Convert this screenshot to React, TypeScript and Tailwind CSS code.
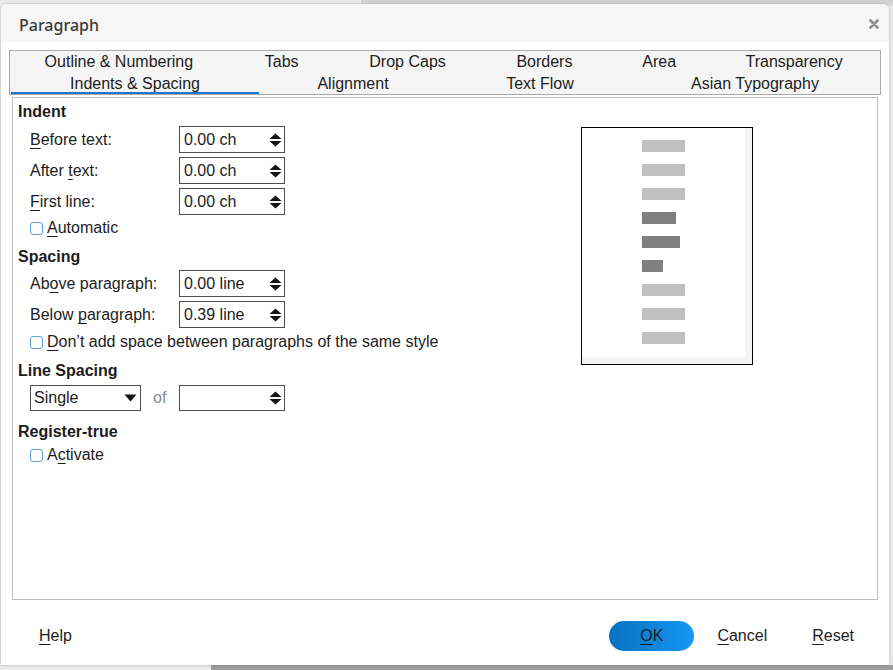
import React from 'react';

const U = ({ children }: { children: React.ReactNode }) => <span className="underline underline-offset-[3px]">{children}</span>;

const SpinArrows = () => (
  <svg width="13" height="14" viewBox="0 0 13 14" className="shrink-0">
    <path d="M0.5 6 L6.5 0.5 L12.5 6 Z M0.5 8 L12.5 8 L6.5 13.5 Z" fill="#141414" />
  </svg>
);

const SpinBox = ({ value, h = 'h-[27px]' }: { value: string; h?: string }) => (
  <div className={`w-[106px] ${h} border border-[#4d4d4d] bg-white flex items-center justify-between pl-[4px] pr-[2px]`}>
    <span>{value}</span>
    <SpinArrows />
  </div>
);

const Checkbox = ({ children }: { children: React.ReactNode }) => (
  <div className="flex items-center h-[20px] pt-[2px] pl-[17px]">
    <span className="w-[13px] h-[13px] rounded-[3px] border-[1.5px] border-[#5ba0de] bg-white mr-[4px]" />
    <span>{children}</span>
  </div>
);

const Section = ({ title, mt }: { title: string; mt: string }) => (
  <div className={`${mt} h-[20px] pt-[2px] flex items-center pl-[5px] font-bold`}>{title}</div>
);

const Row = ({ label, value, mt }: { label: React.ReactNode; value: string; mt: string }) => (
  <div className={`${mt} flex items-center pl-[17px]`}>
    <div className="w-[149px] pt-[1px]">{label}</div>
    <SpinBox value={value} />
  </div>
);

const bars = [
  { w: 'w-[43px]', c: 'bg-[#c0c0c0]' },
  { w: 'w-[43px]', c: 'bg-[#c0c0c0]' },
  { w: 'w-[43px]', c: 'bg-[#c0c0c0]' },
  { w: 'w-[34px]', c: 'bg-[#808080]' },
  { w: 'w-[38px]', c: 'bg-[#808080]' },
  { w: 'w-[21px]', c: 'bg-[#808080]' },
  { w: 'w-[43px]', c: 'bg-[#c0c0c0]' },
  { w: 'w-[43px]', c: 'bg-[#c0c0c0]' },
  { w: 'w-[43px]', c: 'bg-[#c0c0c0]' },
];

const row1 = [
  { t: 'Outline & Numbering', w: 'w-[216px]' },
  { t: 'Tabs', w: 'w-[110px]' },
  { t: 'Drop Caps', w: 'w-[142px]' },
  { t: 'Borders', w: 'w-[132px]' },
  { t: 'Area', w: 'w-[98px]' },
  { t: 'Transparency', w: 'w-[172px]' },
];

const row2 = [
  { t: 'Indents & Spacing', w: 'w-[248px]', active: true },
  { t: 'Alignment', w: 'w-[188px]' },
  { t: 'Text Flow', w: 'w-[186px]' },
  { t: 'Asian Typography', w: 'w-[244px]' },
];

export default function App() {
  return (
    <div className="relative w-[893px] h-[670px] bg-[#ebebeb] overflow-hidden font-['Liberation_Sans',Arial,sans-serif] text-[16px] text-[#1c1c1c]">
      {/* desktop behind the dialog */}
      <div className="absolute left-[361px] top-0 right-0 h-[6px] bg-gradient-to-b from-[#cfcfcf] to-[#dedede]" />
      <div className="absolute left-[211px] bottom-0 right-0 h-[5px] bg-[#9d9d9d]" />

      <div className="absolute left-[1px] top-[4px] w-[888px] h-[661px] bg-white rounded-t-[6px] shadow-[0_0_3px_rgba(0,0,0,0.25)] flex flex-col">
        <div className="h-[38px] shrink-0 bg-[#f6f6f6] rounded-t-[6px] flex items-center justify-between pt-[4px] pl-[18px] pr-[10px]">
          <span className="font-['Noto_Sans',sans-serif] font-medium text-[16px] text-[#3b3b3b]">Paragraph</span>
          <svg width="10" height="10" viewBox="0 0 10 10" className="-mt-[2px]">
            <path d="M1.5 1.5 L8.5 8.5 M8.5 1.5 L1.5 8.5" stroke="#8c8c8c" strokeWidth="2.6" strokeLinecap="round" />
          </svg>
        </div>

        <div className="mt-[8px] mx-[8px] border border-[#a9a9a9] bg-[#f5f5f5] flex flex-col">
          <div className="flex h-[21px] items-center pl-[1px]">
            {row1.map(tab => (
              <div key={tab.t} className={`${tab.w} text-center leading-[21px]`}>{tab.t}</div>
            ))}
          </div>
          <div className="flex h-[22px] pl-[1px]">
            {row2.map(tab => (
              <div
                key={tab.t}
                className={`${tab.w} text-center leading-[20px] pt-[2px] border-b-2 ${tab.active ? 'border-[#1b76cf]' : 'border-transparent'}`}
              >
                {tab.t}
              </div>
            ))}
          </div>
        </div>

        <div className="mt-[2px] mx-[11px] h-[503px] border border-[#bdbdbd] bg-white flex">
          <div className="w-[560px] flex flex-col">
            <Section title="Indent" mt="mt-[3px]" />
            <Row mt="mt-[5px]" label={<><U>B</U>efore text:</>} value="0.00 ch" />
            <Row mt="mt-[4px]" label={<>After <U>t</U>ext:</>} value="0.00 ch" />
            <Row mt="mt-[4px]" label={<><U>F</U>irst line:</>} value="0.00 ch" />
            <div className="mt-[2px]">
              <Checkbox><U>A</U>utomatic</Checkbox>
            </div>

            <Section title="Spacing" mt="mt-[9px]" />
            <Row mt="mt-[4px]" label={<>Ab<U>o</U>ve paragraph:</>} value="0.00 line" />
            <Row mt="mt-[4px]" label={<>Below <U>p</U>aragraph:</>} value="0.39 line" />
            <div className="mt-[3px]">
              <Checkbox><U>D</U>on’t add space between paragraphs of the same style</Checkbox>
            </div>

            <Section title="Line Spacing" mt="mt-[9px]" />
            <div className="mt-[5px] flex items-center pl-[17px]">
              <div className="w-[111px] h-[26px] border border-[#4d4d4d] bg-white flex items-center justify-between pl-[3px] pr-[3px]">
                <span>Single</span>
                <svg width="13" height="8" viewBox="0 0 13 8">
                  <path d="M0.5 0.5 L12.5 0.5 L6.5 7.5 Z" fill="#141414" />
                </svg>
              </div>
              <span className="ml-[12px] w-[26px] text-[#8a8a8a]">of</span>
              <SpinBox value="" h="h-[26px]" />
            </div>

            <Section title="Register-true" mt="mt-[10px]" />
            <div className="mt-[3px]">
              <Checkbox>A<U>c</U>tivate</Checkbox>
            </div>
          </div>

          <div className="ml-[8px] mt-[29px] self-start border border-black bg-[#f4f4f4] pr-[7px] pb-[7px]">
            <div className="w-[163px] h-[229px] bg-white pt-[12px] pl-[60px] flex flex-col gap-[12px]">
              {bars.map((b, i) => (
                <div key={i} className={`${b.w} ${b.c} h-[12px]`} />
              ))}
            </div>
          </div>
        </div>

        <div className="flex items-center mt-[21px] h-[30px] pl-[38px]">
          <span><U>H</U>elp</span>
          <div className="ml-auto flex items-center">
            <button className="w-[85px] h-[30px] rounded-full bg-gradient-to-r from-[#0872c2] to-[#1797f3] text-[#1c1c1c]">
              <U>O</U>K
            </button>
            <span className="ml-[23px]"><U>C</U>ancel</span>
            <span className="ml-[45px] mr-[35px]"><U>R</U>eset</span>
          </div>
        </div>
      </div>
    </div>
  );
}
